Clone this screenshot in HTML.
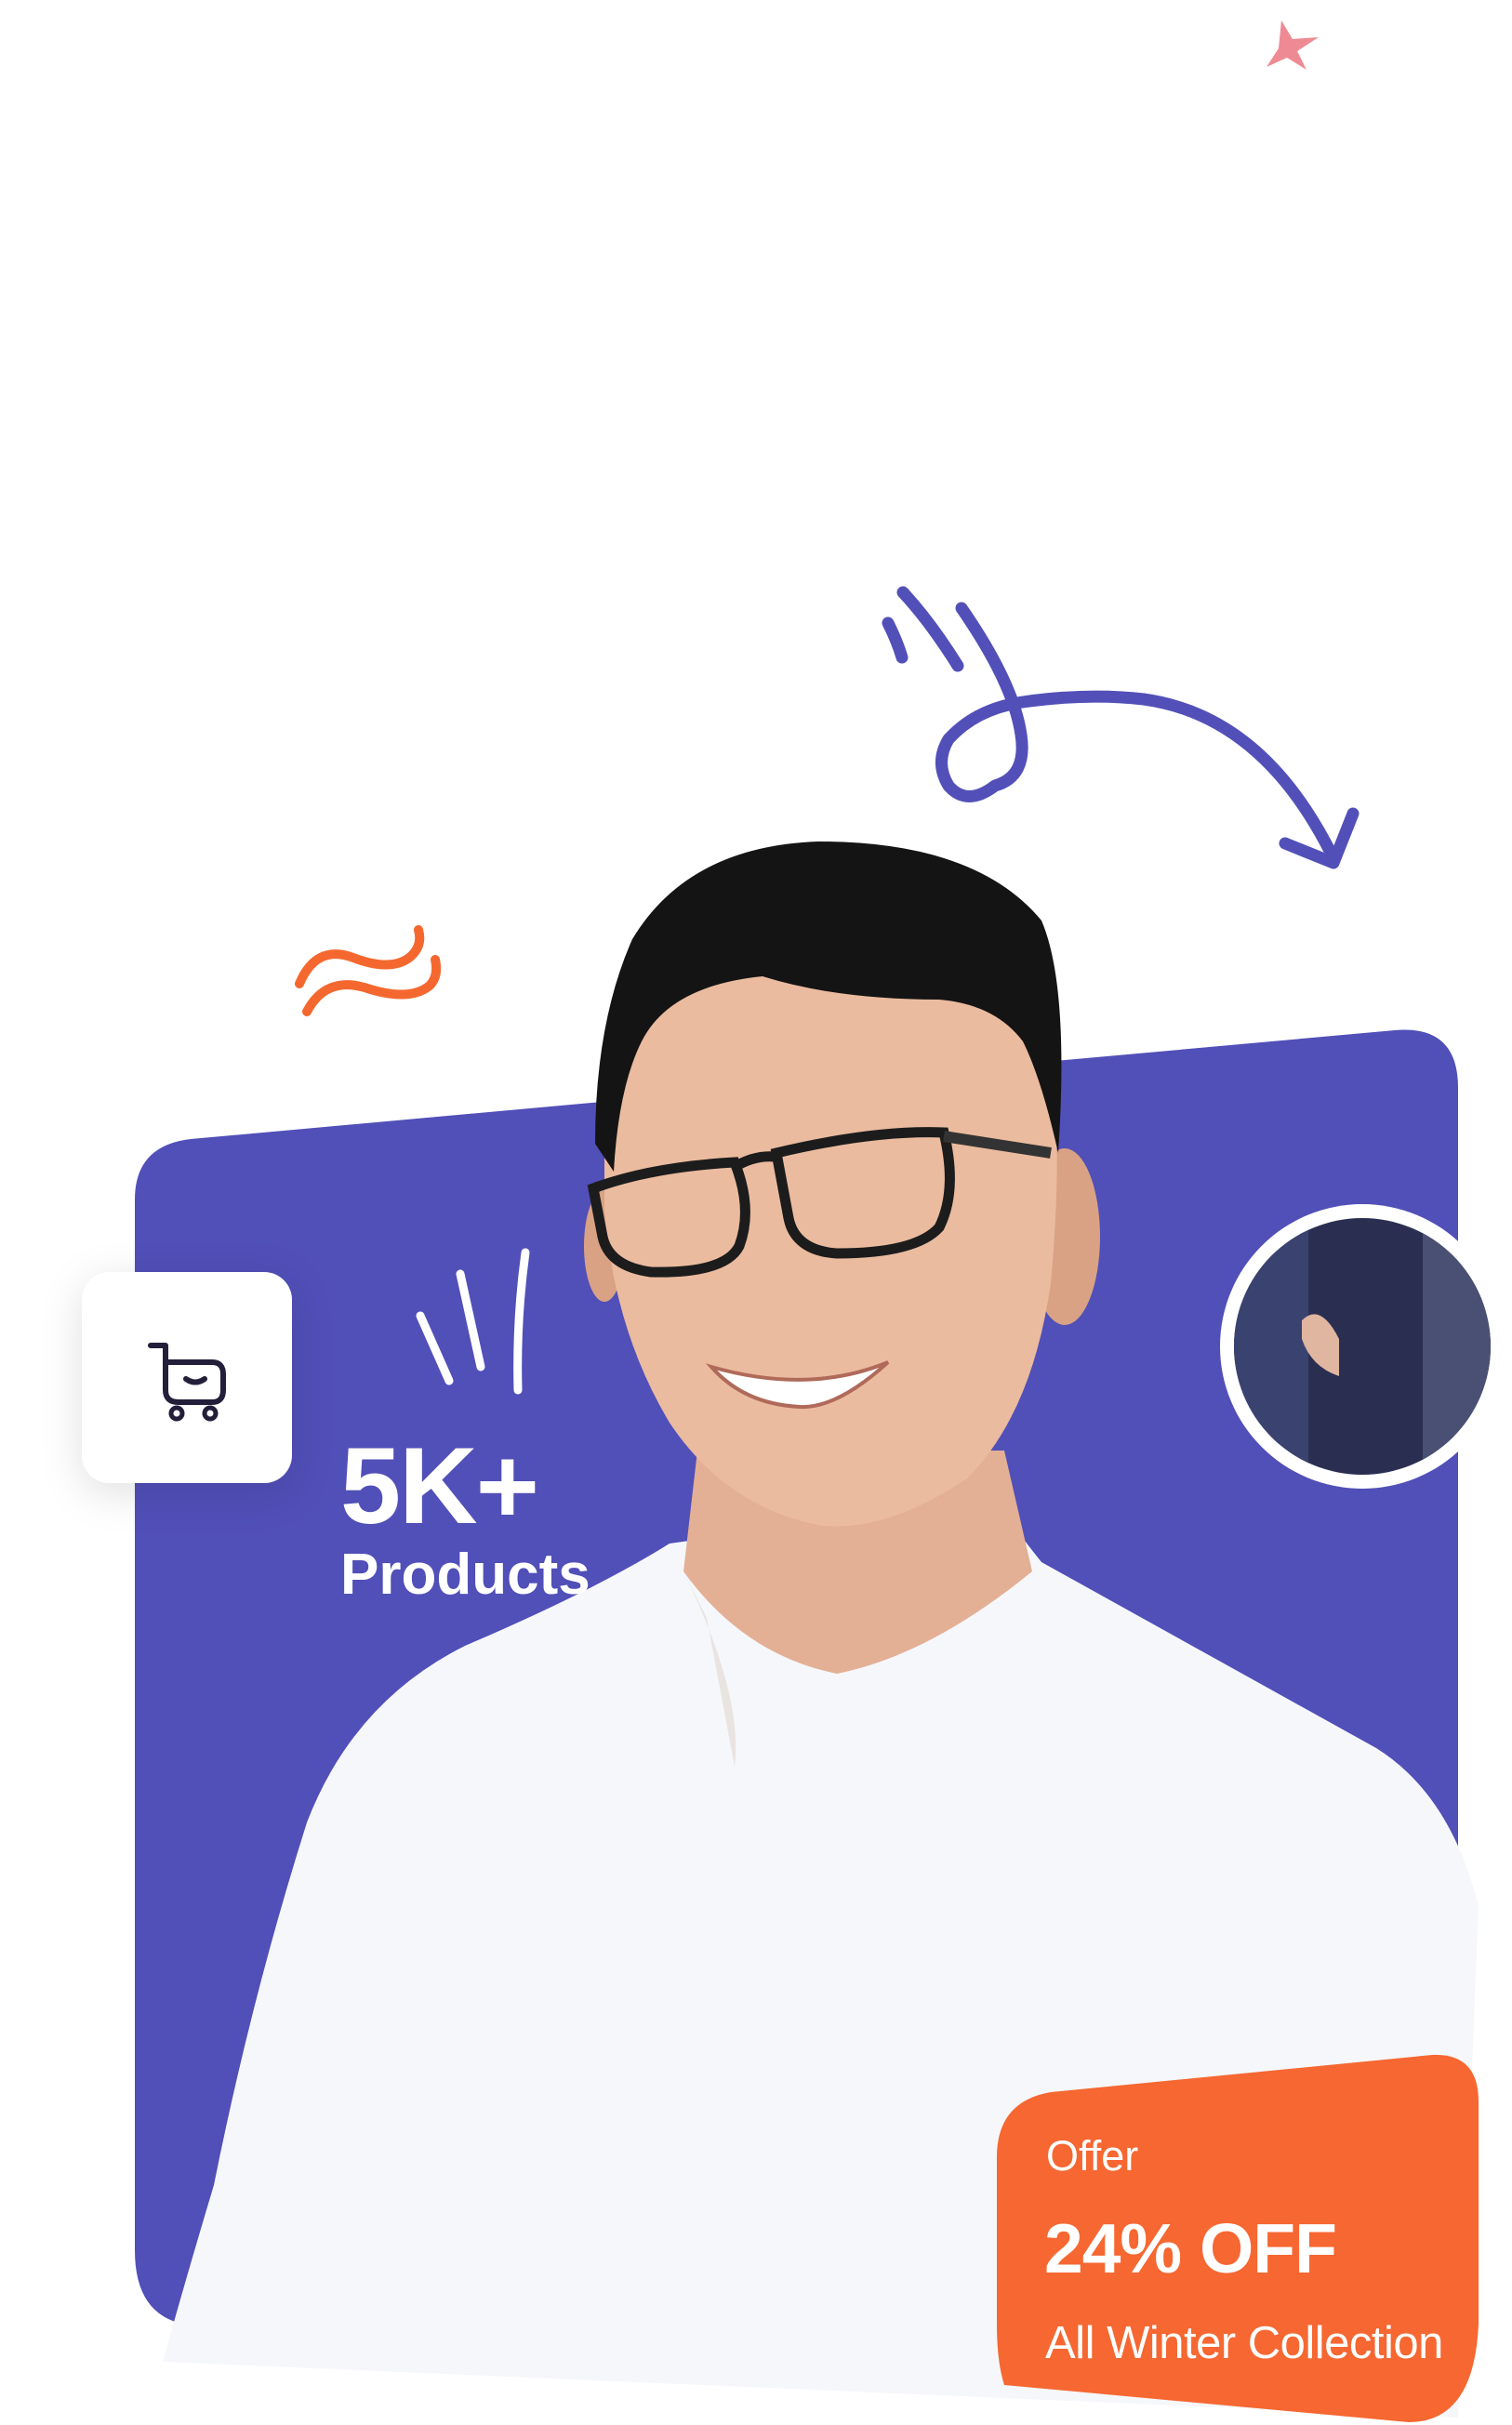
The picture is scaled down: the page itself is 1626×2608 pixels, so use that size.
<!DOCTYPE html>
<html><head><meta charset="utf-8"><style>
html,body{margin:0;padding:0;background:#fff;}
body{width:1626px;height:2608px;overflow:hidden;position:relative;font-family:"Liberation Sans",sans-serif;}
svg{position:absolute;left:0;top:0;}
.t{position:absolute;color:#fff;white-space:nowrap;}
</style></head><body>
<svg width="1626" height="2608" viewBox="0 0 1626 2608">
<defs>
<filter id="sh" x="-50%" y="-50%" width="200%" height="200%"><feDropShadow dx="0" dy="10" stdDeviation="22" flood-color="#000" flood-opacity="0.12"/></filter>
<clipPath id="cc"><circle cx="1465" cy="1448" r="138"/></clipPath>
</defs>
<!-- star -->
<path d="M1378 22 L1390 42 L1418 40 L1395 55 L1405 75 L1384 62 L1362 72 L1375 52 Z" fill="#ee8a93"/>
<!-- arrow -->
<g fill="none" stroke="#5250b8" stroke-width="13" stroke-linecap="round" stroke-linejoin="round">
<path d="M955 670 Q965 690 970 707"/>
<path d="M971 637 Q1000 668 1030 716"/>
<path d="M1034 654 Q1090 735 1098 790 Q1105 835 1070 845 Q1040 868 1020 845 Q1005 820 1020 795 Q1050 762 1100 755 Q1170 745 1230 752 Q1360 770 1435 925"/>
<path d="M1382 907 L1434 928 L1455 875"/>
</g>
<!-- orange squiggle -->
<g fill="none" stroke="#f4682f" stroke-width="10" stroke-linecap="round">
<path d="M322 1058 Q340 1015 380 1030 Q420 1045 440 1030 Q455 1018 450 1000"/>
<path d="M330 1088 Q350 1050 392 1062 Q440 1078 462 1060 Q472 1050 468 1032"/>
</g>
<!-- purple panel -->
<path d="M145 1290 Q145 1232 205 1225 L1500 1108 Q1568 1102 1568 1170 L1568 2450 L200 2500 Q145 2490 145 2420 Z" fill="#514fb8"/>
<!-- white lines -->
<g stroke="#fff" stroke-width="9" stroke-linecap="round" fill="none">
<path d="M452 1415 L483 1485"/>
<path d="M495 1370 L517 1470"/>
<path d="M565 1347 Q555 1420 557 1495"/>
</g>
<!-- person -->
<path d="M720 1660 Q640 1710 500 1770 Q380 1830 330 1960 Q270 2150 230 2350 Q200 2450 175 2540 L1568 2600 L1590 2050 Q1560 1930 1480 1880 Q1300 1780 1120 1680 Q1080 1630 1070 1610 Z" fill="#f6f7fb"/>
<path d="M750 1560 L1080 1560 L1110 1690 Q1000 1780 900 1800 Q800 1780 735 1690 Z" fill="#e3b096"/>
<path d="M730 1680 Q800 1820 790 1900 L760 1740 Z" fill="#e9e4e0"/>
<ellipse cx="1145" cy="1330" rx="38" ry="95" fill="#d9a285"/>
<ellipse cx="650" cy="1340" rx="22" ry="60" fill="#d9a285"/>
<path d="M650 1200 Q650 1050 800 1000 Q960 975 1110 1060 Q1150 1160 1130 1380 Q1110 1520 1040 1590 Q950 1650 880 1640 Q780 1620 720 1530 Q660 1430 650 1300 Z" fill="#ebbb9f"/>
<path d="M640 1230 Q640 1100 680 1010 Q740 910 880 905 Q1050 905 1120 990 Q1150 1060 1138 1240 Q1120 1160 1100 1120 Q1070 1080 1010 1075 Q900 1075 820 1050 Q720 1060 690 1120 Q665 1170 660 1260 Z" fill="#141414"/>
<g fill="none" stroke="#1c1c1c" stroke-width="11">
<path d="M638 1278 Q700 1255 790 1250 Q810 1300 795 1340 Q780 1370 700 1368 Q655 1362 648 1330 Z"/>
<path d="M835 1240 Q940 1215 1015 1218 Q1030 1280 1010 1320 Q985 1348 900 1348 Q855 1345 848 1310 Z"/>
<path d="M790 1255 Q815 1240 840 1245"/>
</g>
<path d="M1015 1222 L1130 1240" stroke="#333" stroke-width="12"/>
<path d="M765 1470 Q870 1500 955 1465 Q900 1515 860 1513 Q800 1510 765 1470 Z" fill="#fff" stroke="#b06a5a" stroke-width="4"/>
<!-- circle photo -->
<circle cx="1465" cy="1448" r="153" fill="#fff"/>
<circle cx="1465" cy="1448" r="138" fill="#2a2f52"/>
<g clip-path="url(#cc)">
<rect x="1327" y="1310" width="80" height="280" fill="#3a4270"/>
<path d="M1400 1420 Q1420 1400 1440 1440 L1440 1480 Q1410 1470 1400 1440 Z" fill="#e0b6a0"/>
<rect x="1530" y="1310" width="80" height="280" fill="#4a5073"/>
</g>
<!-- cart card -->
<rect x="88" y="1368" width="226" height="227" rx="30" fill="#fff" filter="url(#sh)"/>
<g fill="none" stroke="#231f3a" stroke-width="6" stroke-linecap="round" stroke-linejoin="round">
<path d="M162 1447 L178 1447 L178 1495 Q178 1508 192 1508 L228 1508 Q240 1508 240 1495 L240 1478 Q240 1465 228 1465 L178 1465"/>
<path d="M200 1483 Q210 1490 220 1483"/>
</g>
<circle cx="190" cy="1520" r="6" fill="none" stroke="#231f3a" stroke-width="5"/>
<circle cx="226" cy="1520" r="6" fill="none" stroke="#231f3a" stroke-width="5"/>
<!-- orange card -->
<path d="M1072 2320 Q1072 2260 1130 2250 L1540 2210 Q1590 2208 1590 2260 L1590 2500 Q1585 2605 1515 2605 L1080 2565 Q1072 2540 1072 2500 Z" fill="#f66731"/>
</svg>
<div class="t" style="left:366px;top:1530px;font-size:117px;font-weight:bold;letter-spacing:-2px;">5K+</div>
<div class="t" style="left:366px;top:1658px;font-size:62px;font-weight:bold;letter-spacing:0px;">Products</div>
<div class="t" style="left:1125px;top:2293px;font-size:45px;">Offer</div>
<div class="t" style="left:1123px;top:2375px;font-size:75px;font-weight:bold;letter-spacing:-1px;">24% OFF</div>
<div class="t" style="left:1124px;top:2492px;font-size:49px;letter-spacing:-0.5px;">All Winter Collection</div>
</body></html>
